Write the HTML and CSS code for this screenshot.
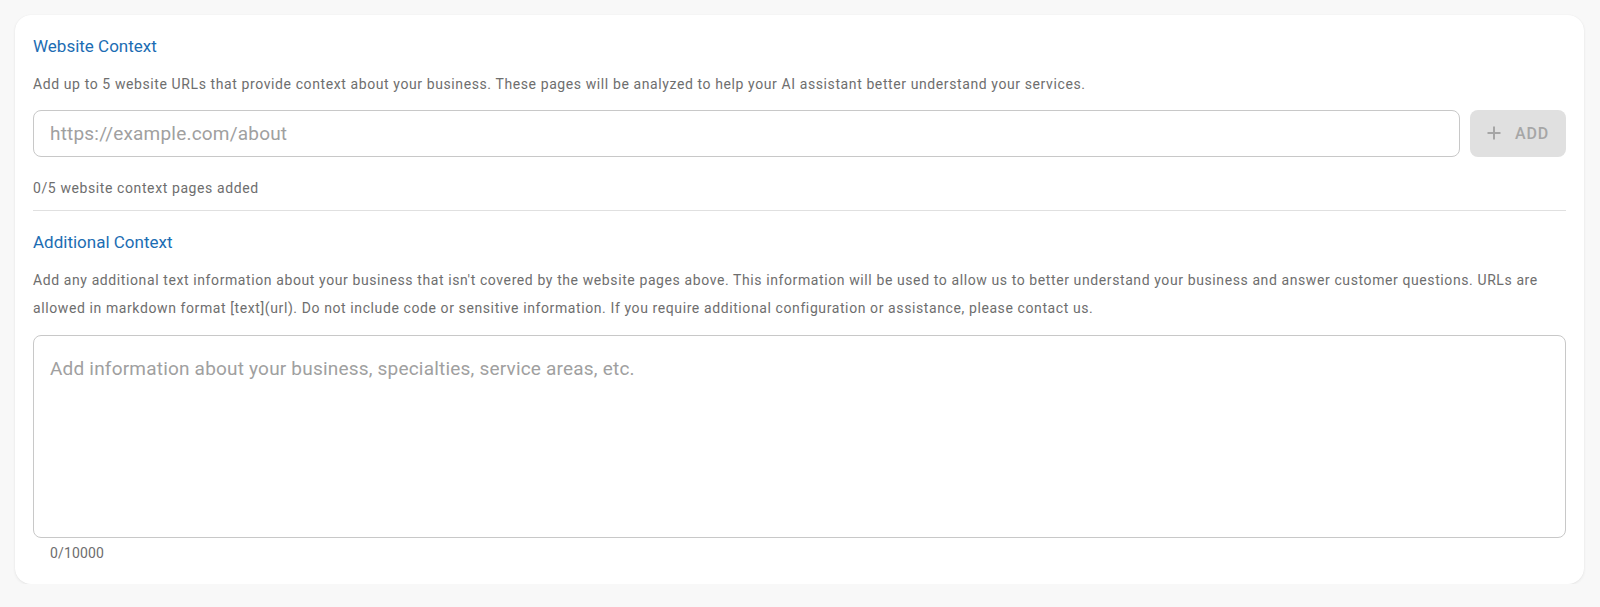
FILE: index.html
```html
<!DOCTYPE html>
<html>
<head>
<meta charset="utf-8">
<link rel="stylesheet" href="styles.css">
</head>
<body>
<div class="card">
  <h2 class="title">Website Context</h2>
  <p class="desc">Add up to 5 website URLs that provide context about your business. These pages will be analyzed to help your AI assistant better understand your services.</p>
  <div class="url-row">
    <input class="url-input" type="text" placeholder="https://example.com/about">
    <button class="add-btn" disabled>
      <svg class="plus" viewBox="0 0 14 14" width="14" height="14"><path d="M7 0.5V13.5M0.5 7H13.5" stroke="currentColor" stroke-width="2" fill="none"/></svg>
      <span>ADD</span>
    </button>
  </div>
  <div class="count">0/5 website context pages added</div>
  <hr class="divider">
  <h2 class="title title2">Additional Context</h2>
  <p class="desc">Add any additional text information about your business that isn't covered by the website pages above. This information will be used to allow us to better understand your business and answer customer questions. URLs are allowed in markdown format [text](url). Do not include code or sensitive information. If you require additional configuration or assistance, please contact us.</p>
  <textarea class="ctx" placeholder="Add information about your business, specialties, service areas, etc."></textarea>
  <div class="chars">0/10000</div>
</div>
</body>
</html>
```
FILE: styles.css
```css
* { box-sizing: border-box; }
html, body {
  margin: 0;
  padding: 0;
  background: #f8f8f8;
  font-family: Roboto, "Liberation Sans", Arial, sans-serif;
}
body { padding: 15px 16px 0 15px; }
.card {
  background: #fff;
  border-radius: 16px;
  box-shadow: 0 1px 3px rgba(0,0,0,0.08), 0 0 1px rgba(0,0,0,0.05);
  padding: 19px 18px 21px 18px;
}
.title {
  margin: 0;
  font-size: 17px;
  line-height: 24px;
  font-weight: 400;
  color: #1c6db3;
}
.desc {
  margin: 12px 0 0;
  font-size: 14px;
  line-height: 28.6px;
  color: #6e6e6e;
  letter-spacing: 0.6px;
}
.url-row {
  display: flex;
  gap: 10px;
  margin-top: 11px;
  height: 47px;
}
.url-input {
  flex: 1;
  height: 47px;
  border: 1px solid #c8c8c8;
  border-radius: 8px;
  padding: 0 16px;
  font-family: inherit;
  font-size: 19px;
  letter-spacing: 0.2px;
  color: #333;
  outline: none;
}
.url-input::placeholder, .ctx::placeholder { color: #a0a0a0; }
.add-btn {
  width: 96px;
  height: 47px;
  border: none;
  border-radius: 8px;
  background: #e0e0e0;
  color: #a6a6a6;
  display: flex;
  align-items: center;
  justify-content: center;
  gap: 14px;
  font-family: inherit;
  font-size: 16px;
  font-weight: 500;
  letter-spacing: 0.8px;
  padding: 0;
}
.plus { display: block; }
.count {
  margin-top: 21px;
  font-size: 14px;
  line-height: 20px;
  color: #6e6e6e;
  letter-spacing: 0.6px;
}
.divider {
  margin: 12px 0 0;
  border: none;
  border-top: 1px solid #e0e0e0;
  height: 0;
}
.title2 { margin-top: 19px; }
.ctx {
  display: block;
  width: 100%;
  height: 203px;
  margin-top: 12px;
  border: 1px solid #c8c8c8;
  border-radius: 8px;
  padding: 21px 16px;
  font-family: inherit;
  font-size: 19px;
  letter-spacing: 0.2px;
  line-height: 24px;
  resize: none;
  outline: none;
}
.chars {
  margin-top: 5px;
  padding-left: 17px;
  font-size: 14px;
  line-height: 20px;
  color: #6e6e6e;
  letter-spacing: 0.15px;
}
```
